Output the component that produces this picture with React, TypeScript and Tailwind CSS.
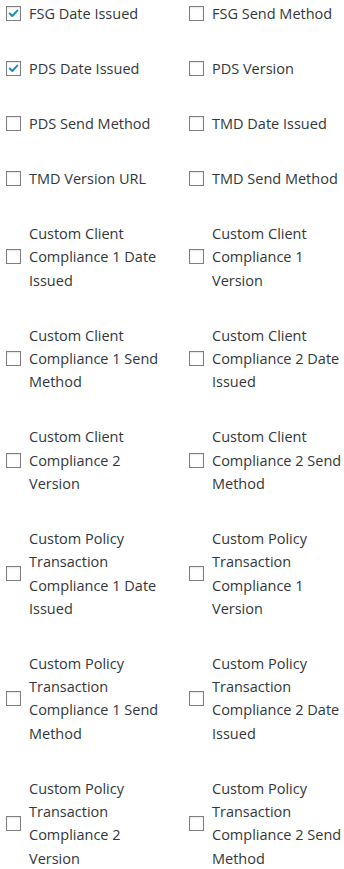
import React from "react";

const items: [string, boolean][] = [
  ["FSG Date Issued", true],
  ["FSG Send Method", false],
  ["PDS Date Issued", true],
  ["PDS Version", false],
  ["PDS Send Method", false],
  ["TMD Date Issued", false],
  ["TMD Version URL", false],
  ["TMD Send Method", false],
  ["Custom Client Compliance 1 Date Issued", false],
  ["Custom Client Compliance 1 Version", false],
  ["Custom Client Compliance 1 Send Method", false],
  ["Custom Client Compliance 2 Date Issued", false],
  ["Custom Client Compliance 2 Version", false],
  ["Custom Client Compliance 2 Send Method", false],
  ["Custom Policy Transaction Compliance 1 Date Issued", false],
  ["Custom Policy Transaction Compliance 1 Version", false],
  ["Custom Policy Transaction Compliance 1 Send Method", false],
  ["Custom Policy Transaction Compliance 2 Date Issued", false],
  ["Custom Policy Transaction Compliance 2 Version", false],
  ["Custom Policy Transaction Compliance 2 Send Method", false],
];

function Box({ checked }: { checked: boolean }) {
  return (
    <span className="shrink-0 w-[15px] h-[15px] border border-[#7e7e7e] bg-white shadow-[inset_0_1px_2px_rgba(0,0,0,0.1)] flex items-center justify-center">
      {checked && (
        <svg width="13" height="13" viewBox="0 0 13 13">
          <path d="M2.8 6.6 L5.3 9 L10.3 3.6" fill="none" stroke="#1e8cbe" strokeWidth="2.1" strokeLinecap="round" strokeLinejoin="round" />
        </svg>
      )}
    </span>
  );
}

export default function App() {
  return (
    <div
      className="w-[344px] bg-white pt-[2px] grid grid-cols-[183px_161px] gap-y-[31.67px] text-[14.5px] leading-[23.33px] text-[#32373c]"
      style={{ fontFamily: '"Open Sans", "Noto Sans", sans-serif' }}
    >
      {items.map(([label, checked], i) => (
        <label
          key={i}
          className={`flex items-center gap-[8px] pl-[6px] ${i % 2 === 0 ? "pr-[22px]" : "pr-[1px]"}`}
        >
          <Box checked={checked} />
          <span>{label}</span>
        </label>
      ))}
    </div>
  );
}
